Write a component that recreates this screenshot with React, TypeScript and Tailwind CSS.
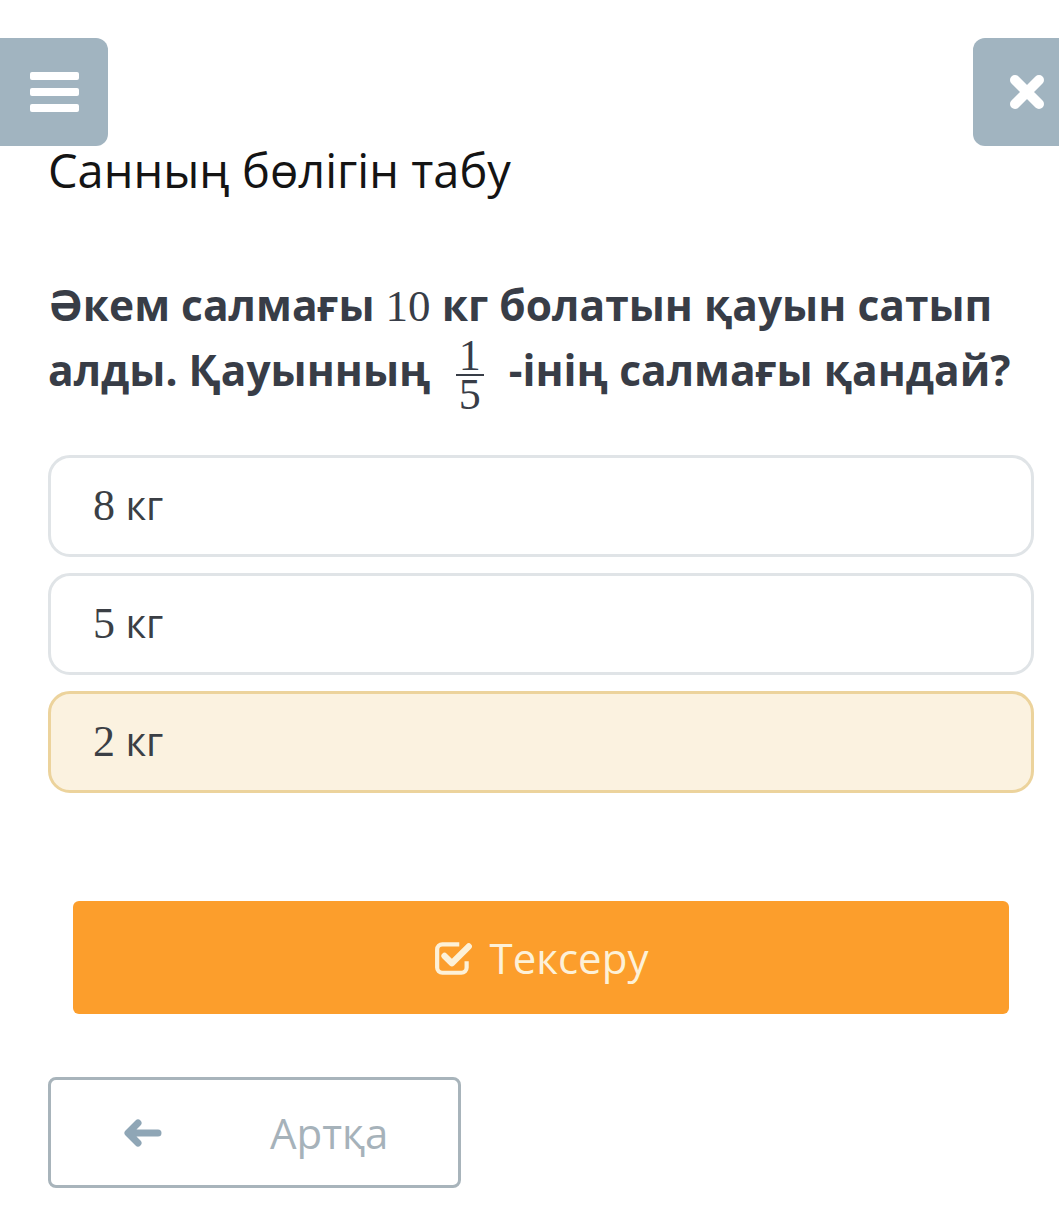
import React from "react";

const sans = { fontFamily: '"Open Sans", "Noto Sans", sans-serif' };
const serif = { fontFamily: '"Liberation Serif", "DejaVu Serif", serif' };

function Option({ num, selected }: { num: string; selected?: boolean }) {
  return (
    <div
      className={
        "flex h-[102px] items-center rounded-[22px] border-[3px] pl-[42px] " +
        (selected ? "border-[#ecd39c] bg-[#fbf2e0]" : "border-[#e0e4e7] bg-white")
      }
    >
      <span className="text-[40px] leading-none text-[#3b3f45]">
        <span style={serif} className="text-[44px]">{num}</span>
        <span style={sans}> кг</span>
      </span>
    </div>
  );
}

export default function App() {
  return (
    <div className="relative h-[1225px] w-[1059px] overflow-hidden bg-white" style={sans}>
      {/* overlay buttons */}
      <div className="absolute left-0 top-[38px] flex h-[108px] w-[108px] items-center justify-center rounded-r-[12px] bg-[#a1b4c0]">
        <div className="flex w-[49px] flex-col gap-[8px]">
          <div className="h-[8px] rounded-[2px] bg-white" />
          <div className="h-[8px] rounded-[2px] bg-white" />
          <div className="h-[8px] rounded-[2px] bg-white" />
        </div>
      </div>
      <div className="absolute left-[973px] top-[38px] flex h-[108px] w-[110px] items-center rounded-l-[12px] bg-[#a1b4c0] pl-[35px]">
        <svg width="38" height="38" viewBox="0 0 38 38">
          <path d="M7 7 L31 31 M31 7 L7 31" stroke="white" strokeWidth="10" strokeLinecap="round" />
        </svg>
      </div>

      <div className="flex flex-col pl-[48px] pr-[25px] pt-[139px]">
        <h1 className="text-[47px] leading-[62px] font-normal text-[#141414]">Санның бөлігін табу</h1>

        <p className="mt-[72px] text-[42.5px] font-bold leading-[63px] text-[#383d47]">
          Әкем салмағы <span style={serif} className="font-normal text-[45px]">10</span> кг болатын қауын сатып
          алды. Қауынның{" "}
          <span
            style={serif}
            className="mx-[14px] -my-[12px] inline-flex flex-col items-center align-middle font-normal text-[44px] leading-[33px]"
          >
            <span>1</span>
            <span className="my-[2px] h-[2px] w-[28px] bg-[#383d47]" />
            <span>5</span>
          </span>{" "}
          -інің салмағы қандай?
        </p>

        <div className="mt-[54px] flex flex-col gap-[16px]">
          <Option num="8" />
          <Option num="5" />
          <Option num="2" selected />
        </div>

        <div className="mx-[25px] mt-[108px] flex h-[113px] items-center justify-center gap-[16px] rounded-[6px] bg-[#fc9e2c]">
          <svg width="40" height="38" viewBox="0 0 38 36">
            <path
              d="M24 5 H8 a5 5 0 0 0 -5 5 V27 a5 5 0 0 0 5 5 H26 a5 5 0 0 0 5 -5 V21"
              fill="none"
              stroke="#fdf1d8"
              strokeWidth="4"
            />
            <path d="M10 16 L17 23 L33 7" fill="none" stroke="#fdf1d8" strokeWidth="6" strokeLinecap="round" strokeLinejoin="round" />
          </svg>
          <span className="text-[42px] leading-none text-[#fdf1d8]">Тексеру</span>
        </div>

        <div className="mt-[63px] flex h-[111px] w-[413px] items-center rounded-[8px] border-[3px] border-[#a8b4bb] pl-[72px]">
          <svg width="40" height="28" viewBox="0 0 40 28">
            <path d="M15 4 L5 14 L15 24 M6 14 H35" fill="none" stroke="#8fa6b6" strokeWidth="7" strokeLinecap="round" strokeLinejoin="round" />
          </svg>
          <span className="ml-[107px] text-[42px] leading-none text-[#a6b2ba]">Артқа</span>
        </div>
      </div>
    </div>
  );
}
